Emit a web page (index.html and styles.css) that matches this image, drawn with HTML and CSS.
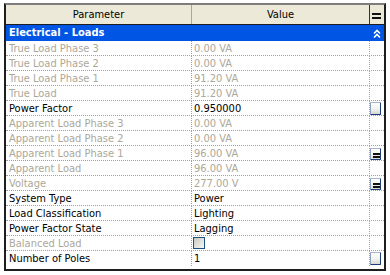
FILE: index.html
```html
<!DOCTYPE html>
<html>
<head>
<meta charset="utf-8">
<link rel="stylesheet" href="styles.css">
</head>
<body>
<div class="page">
  <div class="grid">
    <div class="row head">
      <div class="c1">Parameter</div>
      <div class="c2">Value</div>
      <div class="c3"><span class="eq"></span></div>
    </div>
    <div class="row group">
      <div class="gtitle">Electrical - Loads</div>
      <div class="c3">
        <svg class="chev" width="8" height="9" viewBox="0 0 8 9"><polyline points="1,4.5 4,1.5 7,4.5" fill="none" stroke="#fff" stroke-width="1.6"/><polyline points="1,8.5 4,5.5 7,8.5" fill="none" stroke="#fff" stroke-width="1.6"/></svg>
      </div>
    </div>
    <div class="row dis"><div class="c1">True Load Phase 3</div><div class="c2">0.00 VA</div><div class="c3"></div></div>
    <div class="row dis"><div class="c1">True Load Phase 2</div><div class="c2">0.00 VA</div><div class="c3"></div></div>
    <div class="row dis"><div class="c1">True Load Phase 1</div><div class="c2">91.20 VA</div><div class="c3"></div></div>
    <div class="row dis"><div class="c1">True Load</div><div class="c2">91.20 VA</div><div class="c3"></div></div>
    <div class="row"><div class="c1">Power Factor</div><div class="c2">0.950000</div><div class="c3"><span class="btn"></span></div></div>
    <div class="row dis"><div class="c1">Apparent Load Phase 3</div><div class="c2">0.00 VA</div><div class="c3"></div></div>
    <div class="row dis"><div class="c1">Apparent Load Phase 2</div><div class="c2">0.00 VA</div><div class="c3"></div></div>
    <div class="row dis"><div class="c1">Apparent Load Phase 1</div><div class="c2">96.00 VA</div><div class="c3"><span class="btn list"></span></div></div>
    <div class="row dis"><div class="c1">Apparent Load</div><div class="c2">96.00 VA</div><div class="c3"></div></div>
    <div class="row dis"><div class="c1">Voltage</div><div class="c2">277.00 V</div><div class="c3"><span class="btn list"></span></div></div>
    <div class="row"><div class="c1">System Type</div><div class="c2">Power</div><div class="c3"></div></div>
    <div class="row"><div class="c1">Load Classification</div><div class="c2">Lighting</div><div class="c3"></div></div>
    <div class="row"><div class="c1">Power Factor State</div><div class="c2">Lagging</div><div class="c3"></div></div>
    <div class="row dis"><div class="c1">Balanced Load</div><div class="c2"><span class="check"></span></div><div class="c3"></div></div>
    <div class="row last"><div class="c1">Number of Poles</div><div class="c2">1</div><div class="c3"><span class="btn"></span></div></div>
  </div>
</div>
</body>
</html>
```

FILE: styles.css
```css
* { box-sizing: border-box; }
body {
  margin: 0;
  background: #fff;
  font-family: "DejaVu Sans Condensed", "DejaVu Sans", sans-serif;
  font-size: 11px;
  color: #000;
}
.page {
  padding: 3px 0 0 4px;
}
.grid {
  width: 382px;
  height: 268px;
  border: 2px solid #1e1e1e;
  border-top-color: #7c7c7c;
  display: flex;
  flex-direction: column;
  background: #fff;
}
.row {
  display: grid;
  grid-template-columns: 186px 178px 14px;
  height: 15px;
  flex: none;
  border-bottom: 1px dotted #a0a0a0;
  line-height: 15px;
  white-space: nowrap;
}
.row .c1 {
  padding-left: 3px;
  border-right: 1px dotted #a0a0a0;
}
.row .c2 {
  padding-left: 2px;
  border-right: 1px dotted #a0a0a0;
}
.row .c3 {
  position: relative;
}
.dis {
  color: #aca899;
}
.last {
  border-bottom: none;
}

/* header */
.head {
  height: 20px;
  background: #ece9d8;
  border-bottom: 1px solid #1e1e1e;
  line-height: 19px;
}
.head .c1 {
  text-align: center;
  padding-left: 0;
  border-right: 1px solid #aca899;
}
.head .c2 {
  text-align: center;
  padding-left: 0;
  border-right: 1px solid #333;
}
.eq {
  display: block;
  margin: 8px 0 0 2px;
  width: 9px;
  height: 6px;
  border-top: 2px solid #111;
  border-bottom: 2px solid #111;
}

/* group row */
.group {
  height: 16px;
  background: #0055e5;
  border-bottom: none;
  color: #fff;
  font-weight: bold;
  line-height: 16px;
}
.gtitle {
  grid-column: 1 / 3;
  padding-left: 3px;
}
.chev {
  display: block;
  margin: 4px 0 0 3px;
}

/* small buttons */
.btn {
  display: block;
  margin: 1px 0 0 0;
  width: 11px;
  height: 13px;
  border: 1px solid #1c3f7c;
  border-top-color: #a7b6cc;
  border-left-color: #8ea2c0;
  border-radius: 1px;
  background: linear-gradient(180deg, #ffffff 0%, #f0f0ec 60%, #d8d8d0 100%);
}
.list::before,
.list::after {
  content: "";
  position: absolute;
  left: 2px;
  width: 7px;
  height: 2px;
  background: #111;
}
.list::before { top: 4px; }
.list::after { top: 7px; }
.list {
  position: relative;
  margin-top: 2px;
  height: 12px;
}

/* checkbox */
.check {
  display: block;
  margin: 1px 0 0 -1px;
  width: 12px;
  height: 12px;
  border: 1px solid #1c5180;
  background: linear-gradient(135deg, #c8c8c0 0%, #e6e6e0 60%, #f6f6f2 100%);
}
```
